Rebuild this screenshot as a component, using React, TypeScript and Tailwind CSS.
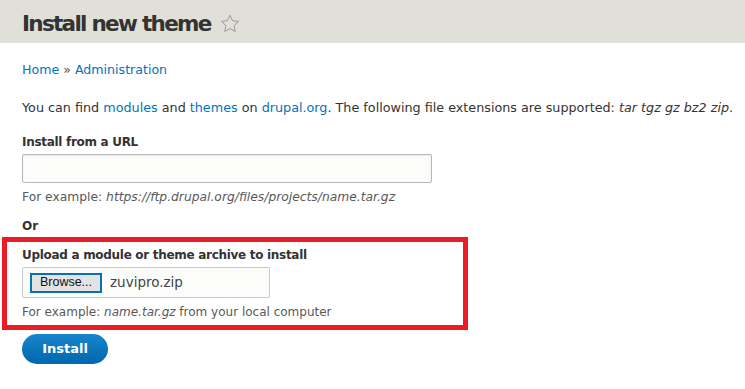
import React from "react";

const link = "text-[#0074bd]";

export default function App() {
  return (
    <div className="w-[745px] h-[389px] bg-white overflow-hidden text-[#333] font-['DejaVu_Sans',_'Liberation_Sans',_sans-serif]">
      <div className="h-[43px] bg-[#e0e0d8] pl-[22px] pt-[4px] flex items-center gap-[9px]">
        <h1 className="text-[21.5px] font-bold text-[#333] leading-none tracking-[-1.7px]">Install new theme</h1>
        <svg width="20" height="19" viewBox="0 0 24 23">
          <path
            d="M12 1.5l3.1 6.6 7.2.9-5.3 5 1.4 7.2L12 17.6l-6.4 3.6 1.4-7.2-5.3-5 7.2-.9z"
            fill="none"
            stroke="#9a9a94"
            strokeWidth="1.2"
            strokeLinejoin="round"
          />
        </svg>
      </div>

      <div className="px-[22px]">
        <div className="mt-[18px] text-[12.6px] leading-[18px]">
          <a className={link}>Home</a> <span className="text-[#555]">»</span> <a className={link}>Administration</a>
        </div>

        <p className="mt-[20px] text-[12.75px] leading-[18px] whitespace-nowrap">
          You can find <a className={link}>modules</a> and <a className={link}>themes</a> on{" "}
          <a className={link}>drupal.org</a>. The following file extensions are supported: <em>tar tgz gz bz2 zip</em>.
        </p>

        <div className="mt-[16px] text-[12px] leading-[18px] font-bold tracking-[-0.3px]">Install from a URL</div>
        <div className="mt-[3px] w-[410px] h-[29px] border border-[#b8b8b8] rounded-[2px] bg-[#fcfcfa] shadow-[inset_0_1px_2px_rgba(0,0,0,0.08)]" />
        <div className="mt-[6px] text-[12.3px] leading-[16px] text-[#595959] whitespace-nowrap">
          For example: <em>https://ftp.drupal.org/files/projects/name.tar.gz</em>
        </div>

        <div className="mt-[12px] text-[12px] leading-[18px] font-bold">Or</div>

        <div className="mt-[2px] -ml-[20px] w-[466px] border-[5px] border-[#ec1c24] pl-[15px] pt-[4px] pb-[5px]">
          <div className="text-[12px] leading-[18px] font-bold tracking-[-0.3px]">Upload a module or theme archive to install</div>
          <div className="mt-[3px] w-[248px] h-[31px] border border-[#c8c8c8] rounded-[2px] bg-[#fcfcfa] flex items-center pl-[7px] gap-[8px]">
            <div className="w-[72px] h-[20px] border-2 border-[#0a6fb4] bg-[#e3e3e3] flex items-center justify-center text-[12.5px] text-[#111] font-['Liberation_Sans',_sans-serif]">
              Browse...
            </div>
            <span className="text-[13.5px] text-[#444]">zuvipro.zip</span>
          </div>
          <div className="mt-[6px] text-[12px] leading-[16px] text-[#595959] whitespace-nowrap">
            For example: <em>name.tar.gz</em> from your local computer
          </div>
        </div>

        <button className="mt-[4px] w-[86px] h-[30px] rounded-full bg-gradient-to-b from-[#1785cc] to-[#0067ad] text-white text-[13px] font-bold flex items-center justify-center">
          Install
        </button>
      </div>
    </div>
  );
}
